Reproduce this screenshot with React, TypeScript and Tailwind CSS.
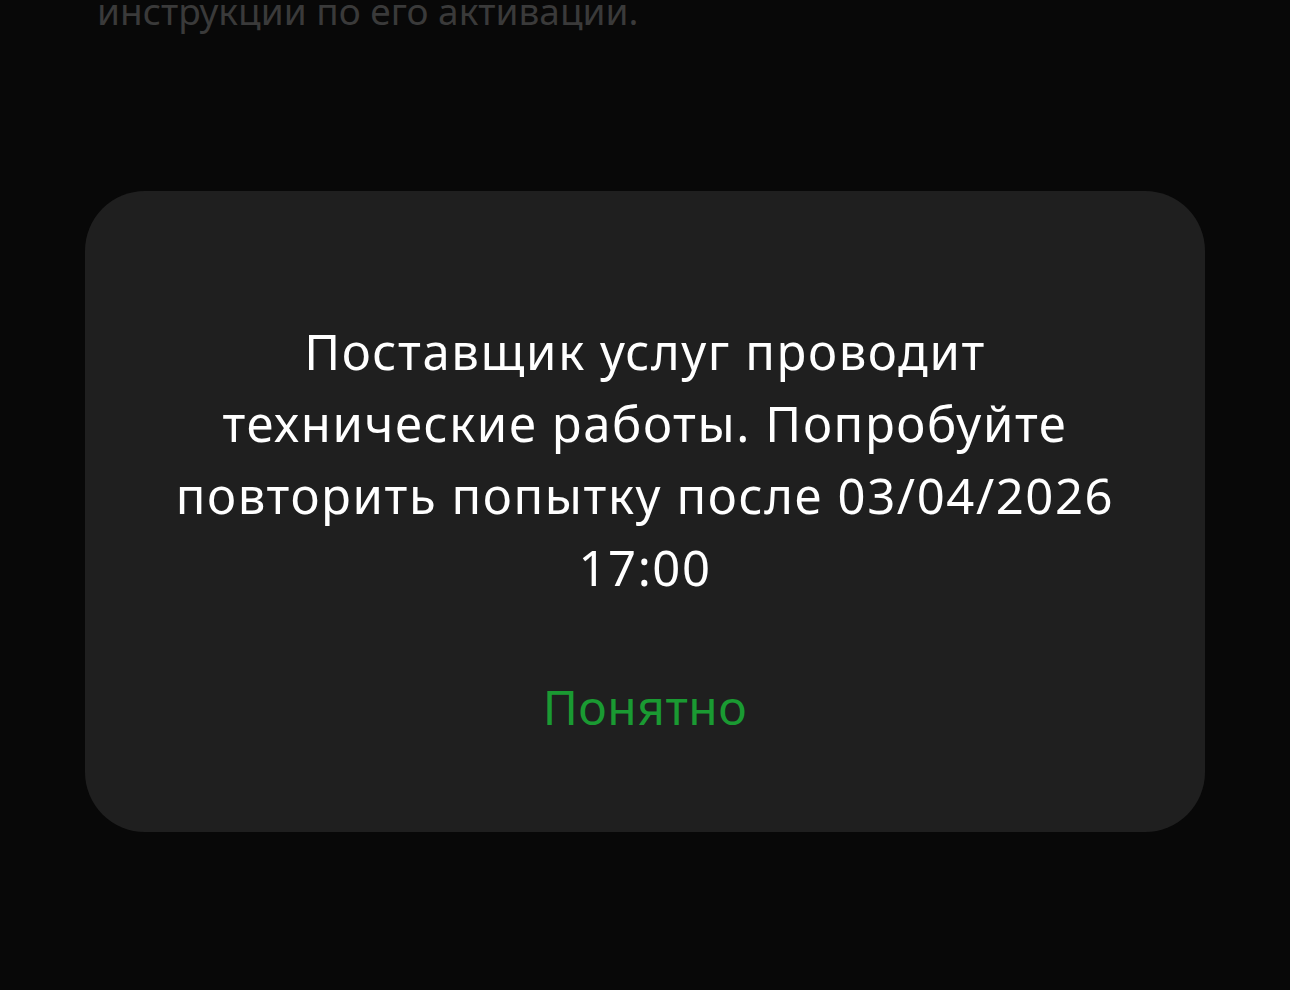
export default function App() {
  return (
    <div
      className="w-[1290px] h-[990px] bg-[#080808] overflow-hidden flex flex-col"
      style={{ fontFamily: '"Noto Sans", "Open Sans", sans-serif' }}
    >
      <p className="px-[97px] -mt-[15px] text-[37px] leading-[52px] text-[#3a3a3a]">
        инструкции по его активации.
      </p>

      <div className="mx-[85px] mt-[154px] h-[641px] rounded-[60px] bg-[#1f1f1f] flex flex-col items-center pt-[124px] px-[80px]">
        <p className="max-w-[955px] text-center text-white text-[49px] leading-[72px] tracking-[1.6px]">
          Поставщик услуг проводит технические работы. Попробуйте повторить попытку после 03/04/2026 17:00
        </p>
        <button className="mt-[72px] text-[48px] leading-[64px] tracking-[0.5px] text-[#1a9a32]">
          Понятно
        </button>
      </div>
    </div>
  )
}
